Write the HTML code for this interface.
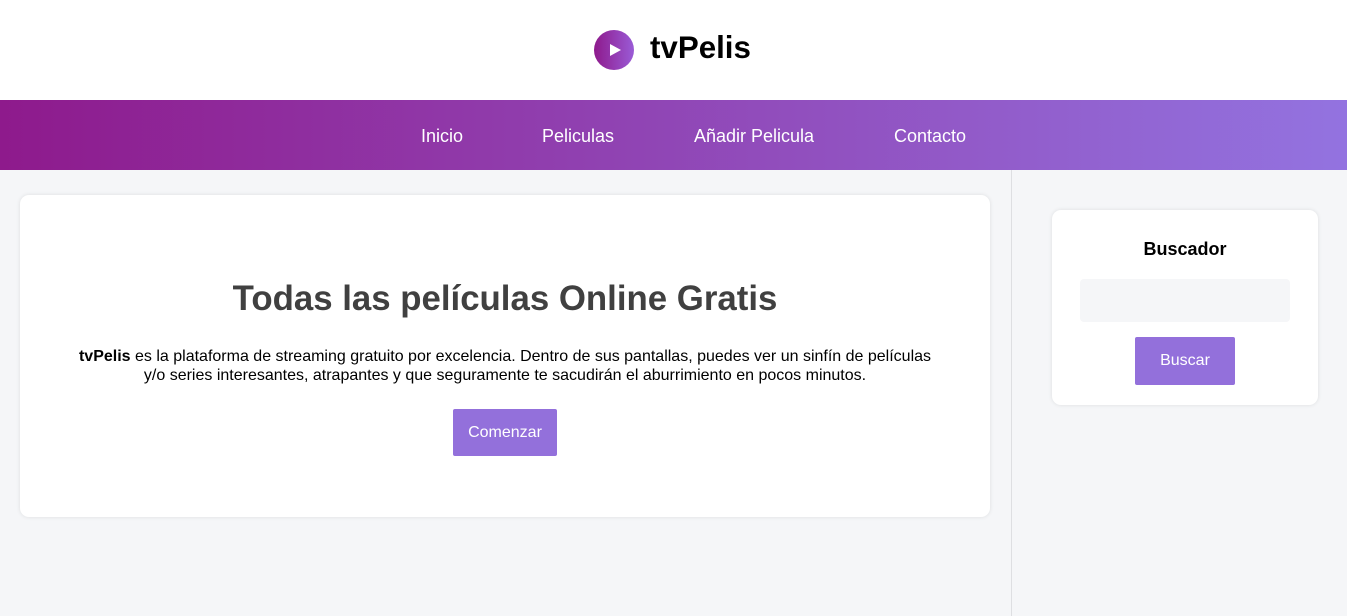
<!DOCTYPE html>
<html><head><meta charset="utf-8"><style>
*{margin:0;padding:0;box-sizing:border-box}
body{width:1347px;height:616px;background:#f5f6f8;font-family:"Liberation Sans",Arial,sans-serif;position:relative;overflow:hidden}
header{height:100px;background:#fff;position:relative}
.logo{position:absolute;left:594px;top:30px;width:40px;height:40px;border-radius:50%;background:linear-gradient(90deg,#8e1a8c,#9a5bd6)}
.logo:after{content:"";position:absolute;left:16px;top:14px;border-left:11px solid #fff;border-top:6px solid transparent;border-bottom:6px solid transparent}
.title{position:absolute;left:650px;top:30px;font-size:31.3px;font-weight:bold;color:#000;line-height:36px}
nav{height:70px;background:linear-gradient(90deg,#8e1a8c,#9373e0);position:relative}
nav a{position:absolute;top:26px;color:#fff;font-size:18px;text-decoration:none;line-height:20px}
.side{position:absolute;left:1011px;top:170px;width:1px;height:446px;background:#dedfe2}
.card{position:absolute;left:20px;top:195px;width:970px;height:322px;background:#fff;border-radius:9px;box-shadow:0 0 4px rgba(0,0,0,.1);text-align:center}
h1{position:absolute;left:0;right:0;top:83px;font-size:34.8px;color:#404040;line-height:42px}
.card p{position:absolute;left:55px;right:55px;top:152px;font-size:16px;line-height:19px;color:#000}
.btn{position:absolute;background:#9370db;color:#fff;font-size:16px;border-radius:2px;text-align:center}
.box{position:absolute;left:1052px;top:210px;width:266px;height:195px;background:#fff;border-radius:9px;box-shadow:0 0 4px rgba(0,0,0,.1)}
.box h3{position:absolute;left:0;right:0;top:29px;text-align:center;font-size:18px;line-height:20px}
.inp{position:absolute;left:28px;top:69px;width:210px;height:43px;background:#f5f6f8;border-radius:4px}
</style></head><body>
<header><div class="logo"></div><div class="title">tvPelis</div></header>
<nav><a style="left:421px">Inicio</a><a style="left:542px">Peliculas</a><a style="left:694px">Añadir Pelicula</a><a style="left:894px">Contacto</a></nav>
<div class="side"></div>
<div class="card"><h1>Todas las películas Online Gratis</h1>
<p><b>tvPelis</b> es la plataforma de streaming gratuito por excelencia. Dentro de sus pantallas, puedes ver un sinfín de películas y/o series interesantes, atrapantes y que seguramente te sacudirán el aburrimiento en pocos minutos.</p>
<div class="btn" style="left:433px;top:214px;width:104px;height:47px;line-height:47px">Comenzar</div></div>
<div class="box"><h3>Buscador</h3><div class="inp"></div><div class="btn" style="left:83px;top:127px;width:100px;height:48px;line-height:48px">Buscar</div></div>
</body></html>
